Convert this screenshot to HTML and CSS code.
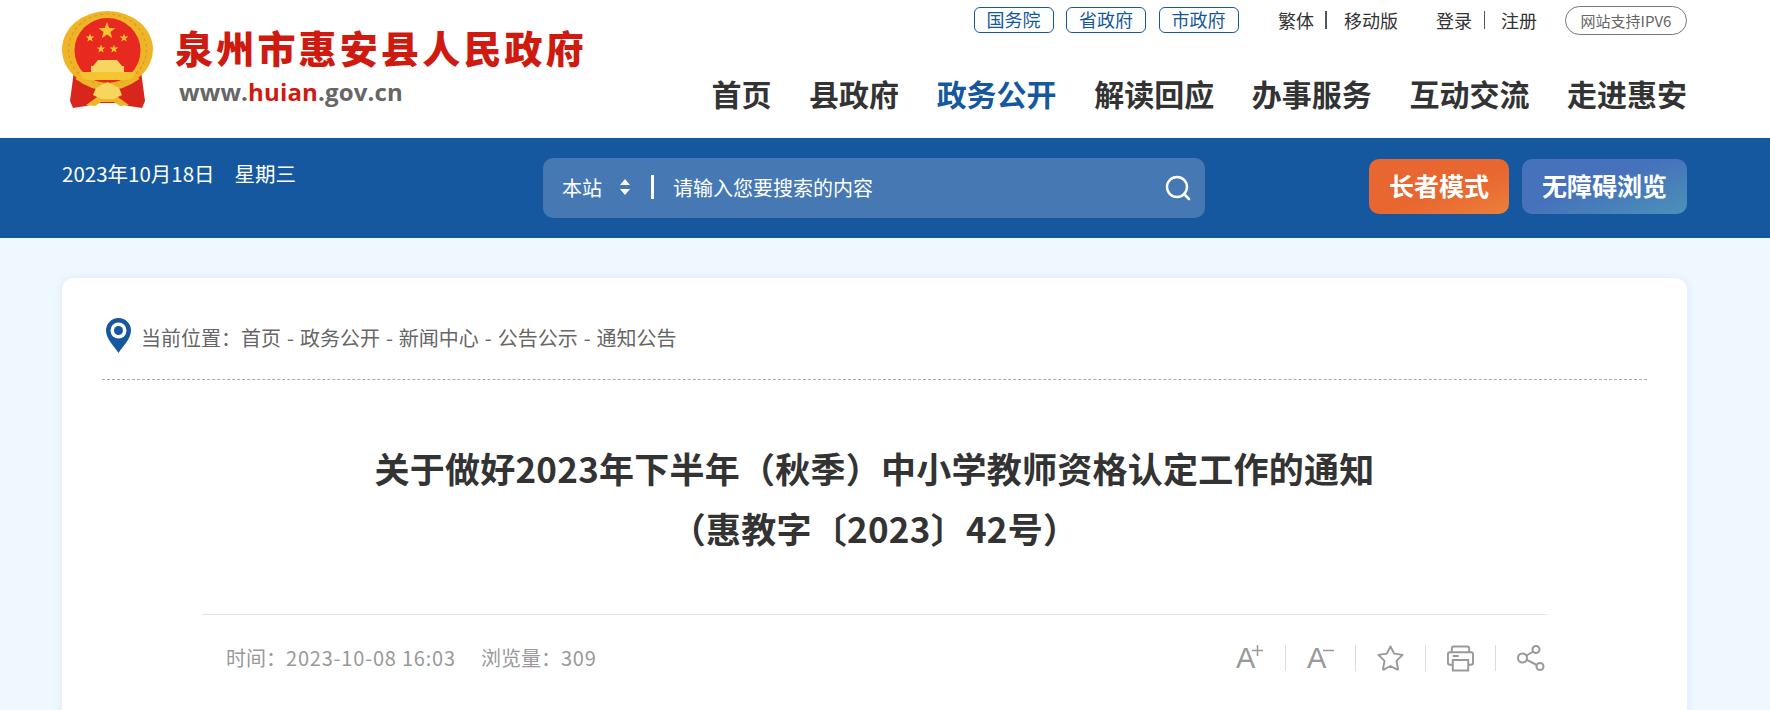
FILE: index.html
```html
<!DOCTYPE html>
<html lang="zh">
<head>
<meta charset="utf-8">
<title>关于做好2023年下半年&#xFF08;秋季&#xFF09;中小学教师资格认定工作的通知</title>
<link rel="stylesheet" href="styles.css">
</head>
<body>
<header class="header">
  <div class="logo">
    <svg class="emblem" viewBox="0 0 91 98" width="91" height="98" aria-hidden="true">
      <defs><path id="st" d="M0 -10 L2.400 -3.200 L9.500 -3.100 L3.800 1.200 L5.900 8 L0 4 L-5.900 8 L-3.800 1.200 L-9.500 -3.100 L-2.400 -3.200 Z"/></defs>
      <path d="M12 60 L8 90 L11 97 L24 95 L36 92 L55 92 L67 95 L80 97 L83 90 L79 60 Z" fill="#d9261c"/>
      <ellipse cx="45.500" cy="38.500" rx="45.500" ry="38.500" fill="#f0b429"/>
      <ellipse cx="45.500" cy="38.500" rx="39" ry="35.500" fill="none" stroke="#d99a1e" stroke-width="1.200" stroke-dasharray="3 3"/>
      <ellipse cx="45.500" cy="39.500" rx="33" ry="32.500" fill="#e8291f"/>
      <use href="#st" transform="translate(45 20) scale(.9)" fill="#f5c531"/>
      <use href="#st" transform="translate(28 27) scale(.45)" fill="#f5c531"/>
      <use href="#st" transform="translate(62 27) scale(.45)" fill="#f5c531"/>
      <use href="#st" transform="translate(39 38) scale(.45)" fill="#f5c531"/>
      <use href="#st" transform="translate(52 38) scale(.45)" fill="#f5c531"/>
      <path d="M36 49 H55 L60 55 H62 V61 H29 V55 H31 Z" fill="#f6d65e"/>
      <path d="M18 61 H73 L71 69 H20 Z" fill="#f5c531"/>
      <path d="M15 66 Q45 88 76 66" fill="none" stroke="#f0b429" stroke-width="5"/>
      <path d="M24 94 L38 84 H53 L67 94 L58 95 L52 91 H39 L33 95 Z" fill="#f0b429"/>
      <path d="M34 77 L45.500 71 L57 77 L60 84 L52 88 H39 L31 84 Z" fill="#f6d65e"/>
    </svg>
    <div class="logo-text">
      <div class="site-name">泉州市惠安县人民政府</div>
      <div class="site-url">www.<span class="url-red">huian</span>.gov.cn</div>
    </div>
  </div>
  <div class="head-right">
    <div class="top-links">
      <a class="pill">国务院</a>
      <a class="pill">省政府</a>
      <a class="pill">市政府</a>
      <div class="link-pair pair-a"><span>繁体</span><i class="bar"></i><span>移动版</span></div>
      <div class="link-pair pair-b"><span>登录</span><i class="bar thin"></i><span>注册</span></div>
      <a class="ipv6">网站支持IPV6</a>
    </div>
    <nav class="nav">
      <a>首页</a><a>县政府</a><a class="active">政务公开</a><a>解读回应</a><a>办事服务</a><a>互动交流</a><a>走进惠安</a>
    </nav>
  </div>
</header>

<section class="band">
  <div class="date"><span>2023年10月18日</span><span>星期三</span></div>
  <div class="search">
    <span class="scope">本站</span>
    <svg class="updown" viewBox="0 0 10 16" width="10" height="16" aria-hidden="true"><path d="M5 0 L10 6 H0 Z M0 10 H10 L5 16 Z" fill="#fff"/></svg>
    <i class="divider"></i>
    <span class="placeholder">请输入您要搜索的内容</span>
    <svg class="magnifier" viewBox="0 0 26 26" width="26" height="26" aria-hidden="true"><circle cx="12" cy="12" r="10" fill="none" stroke="#fff" stroke-width="2.400"/><path d="M19 19 L24 24" stroke="#fff" stroke-width="2.600" stroke-linecap="round"/></svg>
  </div>
  <div class="modes">
    <a class="mode elder">长者模式</a>
    <a class="mode access">无障碍浏览</a>
  </div>
</section>

<main class="page">
  <article class="card">
    <div class="crumbs">
      <svg class="pin" viewBox="0 0 25 35" width="25" height="35" aria-hidden="true"><path d="M12.500 0 C5.500 0 0 5.500 0 12.500 C0 21 8 28 12.500 35 C17 28 25 21 25 12.500 C25 5.500 19.500 0 12.500 0 Z" fill="#15589f"/><circle cx="12.500" cy="12.500" r="8" fill="#fff"/><circle cx="12.500" cy="12.500" r="4.500" fill="#15589f"/></svg>
      <span class="crumb-label">当前位置&#xFF1A;</span>
      <span class="crumb-path">首页 - 政务公开 - 新闻中心 - 公告公示 - 通知公告</span>
    </div>
    <h1 class="title">关于做好2023年下半年&#xFF08;秋季&#xFF09;中小学教师资格认定工作的通知<br>&#xFF08;惠教字〔2023〕42号&#xFF09;</h1>
    <div class="meta">
      <div class="meta-text"><span>时间&#xFF1A;<span class="num">2023-10-08 16:03</span></span><span>浏览量&#xFF1A;<span class="num">309</span></span></div>
      <div class="tools">
        <span class="tool tool-text">A<svg class="sign" viewBox="0 0 11 11" width="11" height="11" aria-hidden="true"><path d="M0 5.500 H11 M5.500 0 V11" stroke="#999" stroke-width="1.500"/></svg></span>
        <span class="tool tool-text">A<svg class="sign" viewBox="0 0 11 11" width="11" height="11" aria-hidden="true"><path d="M0 5.500 H11" stroke="#999" stroke-width="1.500"/></svg></span>
        <span class="tool"><svg viewBox="0 0 28 28" width="28" height="28" aria-hidden="true"><path d="M14 2 L17.800 9.500 L26.500 10.800 L20.200 17 L21.800 25.500 Q21.700 26.200 21 26 L14 22.300 L7 26 Q6.300 26.200 6.200 25.500 L7.800 17 L1.500 10.800 L10.200 9.500 Z" fill="none" stroke="#999" stroke-width="2" stroke-linejoin="round"/></svg></span>
        <span class="tool"><svg viewBox="0 0 28 28" width="28" height="28" aria-hidden="true"><path d="M5 8 V4 Q5 2 7 2 H21 Q23 2 23 4 V8 M6 21 H3 Q1 21 1 19 V10 Q1 8 3 8 H25 Q27 8 27 10 V19 Q27 21 25 21 H22 M6 16 H22 V27 H6 Z M6 12 H12" fill="none" stroke="#999" stroke-width="2"/></svg></span>
        <span class="tool"><svg viewBox="0 0 28 28" width="28" height="28" aria-hidden="true"><circle cx="5.500" cy="14" r="4.500" fill="none" stroke="#999" stroke-width="2"/><circle cx="19" cy="5.500" r="3.500" fill="none" stroke="#999" stroke-width="2"/><circle cx="23" cy="22.500" r="3.500" fill="none" stroke="#999" stroke-width="2"/><path d="M9.500 11.500 L16.200 7.500 M9.800 15.800 L19.800 21" stroke="#999" stroke-width="2"/></svg></span>
      </div>
    </div>
  </article>
</main>
</body>
</html>
```
FILE: styles.css
```css
* { box-sizing: border-box; }
html, body { margin: 0; height: 710px; overflow: hidden; }
body {
  background: #eff7ff;
  font-family: "Noto Sans CJK SC", "Liberation Sans", sans-serif;
  color: #333;
}
.header {
  height: 138px;
  background: #fff;
  padding: 0 83px 0 62px;
  display: flex;
  justify-content: space-between;
}
.logo { display: flex; align-items: flex-start; padding-top: 11px; }
.emblem { flex: none; }
.logo-text { margin-left: 22px; }
.site-name {
  font-weight: 900;
  font-size: 38px;
  line-height: 52px;
  letter-spacing: 3.200px;
  color: #cf1a10;
  margin-top: 10px;
  white-space: nowrap;
}
.site-url {
  font-family: "Open Sans", "Liberation Sans", sans-serif;
  font-weight: 700;
  font-size: 24px;
  line-height: 32px;
  letter-spacing: 0.150px;
  color: #666;
  margin-left: 4px;
  margin-top: 3px;
}
.url-red { color: #cf1a10; }
.head-right { display: flex; flex-direction: column; align-items: flex-end; }
.top-links {
  display: flex;
  align-items: center;
  height: 36px;
  margin-top: 2px;
  font-size: 18px;
}
.pill {
  width: 80px;
  height: 26px;
  margin-right: 12.500px;
  border: 1px solid #15589f;
  border-radius: 6px;
  color: #15589f;
  font-size: 18px;
  line-height: 23px;
  text-align: center;
}
.link-pair { display: flex; align-items: center; font-size: 18px; color: #333; line-height: 26px; }
.pair-a { margin-left: 27px; }
.pair-b { margin-left: 38px; }
.bar { width: 2px; height: 18px; background: #555; margin: 0 17px 0 11px; }
.bar.thin { width: 1px; margin: 0 16px 0 12px; }
.ipv6 {
  margin-left: 28px;
  width: 122px;
  height: 29px;
  border: 1px solid #777;
  border-radius: 15px;
  color: #666;
  font-size: 15px;
  line-height: 27px;
  text-align: center;
}
.nav {
  display: flex;
  gap: 37.600px;
  margin-top: 29.500px;
  font-size: 30px;
  font-weight: 700;
  line-height: 50px;
  color: #333;
}
.nav .active { color: #15589f; }
.band {
  height: 100px;
  background: #15589f;
  padding: 0 83px 0 62px;
  display: flex;
  color: #fff;
}
.date {
  width: 481px;
  display: flex;
  gap: 20px;
  font-size: 20.500px;
  line-height: 26px;
  padding-top: 21.500px;
}
.search {
  width: 662px;
  height: 60px;
  margin-top: 20px;
  background: #4679b3;
  border-radius: 10px;
  display: flex;
  align-items: center;
  padding: 0 14px 2px 19px;
  font-size: 20px;
}
.updown { margin-left: 18px; }
.magnifier { margin-top: 2px; }
.divider { width: 3px; height: 24px; background: #fff; margin: 0 19px 0 21px; }
.placeholder { flex: 1; }
.modes { margin-left: auto; display: flex; gap: 13px; margin-top: 21px; }
.mode {
  height: 55px;
  border-radius: 10px;
  color: #fff;
  font-size: 25px;
  font-weight: 700;
  line-height: 53px;
  text-align: center;
}
.elder { width: 140px; background: linear-gradient(160deg, #e8662f 55%, #ec7f3c 100%); }
.access { width: 165px; background: linear-gradient(160deg, #4672bb 45%, #4a92b8 100%); }
.page { padding: 40px 83px 0 62px; }
.card {
  background: #fff;
  border-radius: 12px;
  box-shadow: 0 0 8px rgba(60, 120, 190, 0.1);
  padding: 0 40px;
  height: 500px;
}
.crumbs {
  height: 102px;
  border-bottom: 1px dashed #aaa;
  display: flex;
  align-items: center;
  padding-left: 4px;
  padding-top: 18px;
  font-size: 20px;
  color: #666;
}
.pin { margin-right: 10px; margin-top: -4px; }
.crumb-label { width: 100px; }
.crumb-path { word-spacing: 1.500px; }
.title {
  margin: 58px 0 0;
  font-size: 35px;
  font-weight: 700;
  line-height: 60px;
  letter-spacing: 0.250px;
  text-align: center;
  color: #333;
}
.meta {
  margin: 56px 100px 0;
  border-top: 1px solid #e3e3e3;
  height: 86px;
  display: flex;
  align-items: center;
  justify-content: space-between;
  padding-left: 24px;
  color: #999;
  font-size: 20px;
}
.meta-text { display: flex; gap: 25px; }
.num { letter-spacing: 0.800px; }
.tools { display: flex; align-items: center; }
.tool {
  width: 70px;
  height: 26px;
  padding: 0 21px;
  border-left: 1px solid #ddd;
  display: flex;
  align-items: center;
}
.tool:first-child { border-left: 0; }
.tool:last-child { width: 52px; padding-right: 2px; }
.tool-text { font-size: 29px; line-height: 26px; color: #999; font-family: "Liberation Sans", sans-serif; white-space: nowrap; }
.sign { flex: none; margin: -15px 0 0 -3px; }
```
